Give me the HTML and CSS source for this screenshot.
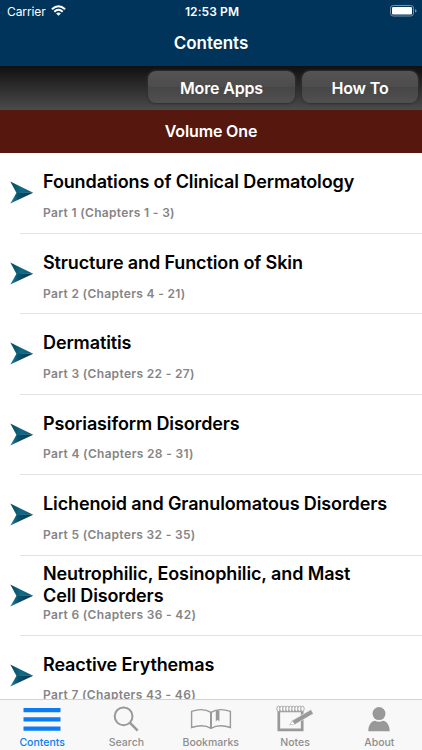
FILE: index.html
```
<!DOCTYPE html>
<html lang="en">
<head>
<meta charset="utf-8">
<title>Contents</title>
<link rel="stylesheet" href="styles.css">
</head>
<body>
<svg width="0" height="0" class="defs" aria-hidden="true">
  <defs>
    <linearGradient id="blade" x1="0" y1="0" x2="1" y2="0"><stop offset="0" stop-color="#06495f"/><stop offset=".5" stop-color="#126a86"/><stop offset="1" stop-color="#0b5a76"/></linearGradient>
    <linearGradient id="shade" x1="0" y1="0" x2="1" y2="0"><stop offset="0" stop-color="#2088a0"/><stop offset=".35" stop-color="#0a506b"/><stop offset="1" stop-color="#063549"/></linearGradient>
    <symbol id="arrow" viewBox="0 0 24 23"><path d="M.8.5 23.7 11.7 7 12Z" fill="url(#blade)"/><path d="M7 11.7H23.7L.8 22.5Z" fill="url(#shade)"/></symbol>
  </defs>
</svg>
<div class="screen">
  <header class="header">
    <div class="status">
      <div class="carrier"><span>Carrier</span>
        <svg width="15" height="11" viewBox="0 0 15 11"><g fill="none" stroke="#fff" stroke-width="2"><path d="M.9 4.2Q7.5-1.8 14.1 4.2"/><path d="M3.3 6.7Q7.5 2.9 11.7 6.7"/></g><path d="M5.1 8.4Q7.5 6.4 9.9 8.4L7.5 10.8Z" fill="#fff"/></svg>
      </div>
      <span class="time">12:53 PM</span>
      <svg class="battery" width="27" height="12" viewBox="0 0 27 12"><rect x=".5" y=".5" width="23" height="10.5" rx="2.7" fill="none" stroke="#7890a6"/><rect x="2" y="2" width="20" height="7.5" rx="1.2" fill="#fff"/><path d="M25 4Q26.6 4.4 26.6 5.8T25 7.6Z" fill="#7890a6"/></svg>
    </div>
    <h1>Contents</h1>
  </header>
  <nav class="toolbar">
    <button class="more"><span>More Apps</span></button>
    <button class="how"><span>How To</span></button>
  </nav>
  <h2 class="volume"><span>Volume One</span></h2>
  <main class="list">
    <article class="row"><svg class="arrow"><use href="#arrow"/></svg><div class="copy"><h3>Foundations of Clinical Dermatology</h3><p>Part 1 (Chapters 1 - 3)</p></div></article>
    <article class="row"><svg class="arrow"><use href="#arrow"/></svg><div class="copy"><h3>Structure and Function of Skin</h3><p>Part 2 (Chapters 4 - 21)</p></div></article>
    <article class="row"><svg class="arrow"><use href="#arrow"/></svg><div class="copy"><h3>Dermatitis</h3><p>Part 3 (Chapters 22 - 27)</p></div></article>
    <article class="row"><svg class="arrow"><use href="#arrow"/></svg><div class="copy"><h3>Psoriasiform Disorders</h3><p>Part 4 (Chapters 28 - 31)</p></div></article>
    <article class="row"><svg class="arrow"><use href="#arrow"/></svg><div class="copy"><h3>Lichenoid and Granulomatous Disorders</h3><p>Part 5 (Chapters 32 - 35)</p></div></article>
    <article class="row double"><svg class="arrow"><use href="#arrow"/></svg><div class="copy"><h3>Neutrophilic, Eosinophilic, and Mast<br>Cell Disorders</h3><p>Part 6 (Chapters 36 - 42)</p></div></article>
    <article class="row"><svg class="arrow"><use href="#arrow"/></svg><div class="copy"><h3>Reactive Erythemas</h3><p>Part 7 (Chapters 43 - 46)</p></div></article>
  </main>
  <footer class="tabs">
    <div class="tab active"><svg width="42" height="30" viewBox="0 0 42 30"><path d="M2.5 7h37v4.2h-37zM2.5 16.3h37v4.2h-37zM2.5 25.5h37v4.2h-37z" fill="#0b7cf4"/></svg><span>Contents</span></div>
    <div class="tab"><svg width="42" height="30" viewBox="0 0 42 30"><g fill="none" stroke="#999"><circle cx="18.6" cy="15.3" r="8.9" stroke-width="2"/><path d="m25 21.8 7.7 7.8" stroke-width="2.5"/></g></svg><span>Search</span></div>
    <div class="tab"><svg width="42" height="30" viewBox="0 0 42 30"><g fill="none" stroke="#999" stroke-width="1.4"><path d="M21 11.3C16 8.2 8 8.2 1.6 10.3V26.5C8 24.3 16 24.3 21 27.3C26 24.3 34 24.3 40.4 26.5V10.3C34 8.2 26 8.2 21 11.3Z"/><path d="M21 11v16" stroke-width="2"/></g><path d="M25.8 9.5H29.4V20.6L27.6 18.8 25.8 20.6Z" fill="#999"/></svg><span>Bookmarks</span></div>
    <div class="tab"><svg width="42" height="32" viewBox="0 0 42 32"><path d="M4.8 11h23.4v18.9H4.8Z" fill="none" stroke="#999" stroke-width="2.7"/><g fill="#f8f8f8" stroke="#999" stroke-width=".8"><ellipse cx="4.5" cy="8.7" rx="1.7" ry="2.7"/><ellipse cx="7.5" cy="8.7" rx="1.7" ry="2.7"/><ellipse cx="10.5" cy="8.7" rx="1.7" ry="2.7"/><ellipse cx="13.5" cy="8.7" rx="1.7" ry="2.7"/><ellipse cx="16.5" cy="8.7" rx="1.7" ry="2.7"/><ellipse cx="19.5" cy="8.7" rx="1.7" ry="2.7"/><ellipse cx="22.5" cy="8.7" rx="1.7" ry="2.7"/><ellipse cx="25.5" cy="8.7" rx="1.7" ry="2.7"/><ellipse cx="28.5" cy="8.7" rx="1.7" ry="2.7"/></g><path d="m14.6 25.5 4-5.2L37 9.5l2.4 4.2L21 24.5Z" fill="#999" stroke="#f8f8f8" stroke-width=".6"/><path d="m15.9 24.6 2.9-3.3 1.6 2.7Z" fill="#fff"/></svg><span>Notes</span></div>
    <div class="tab"><svg width="42" height="30" viewBox="0 0 42 30"><g fill="#999"><circle cx="21" cy="12.6" r="6.5"/><path d="M10.3 30.3C10.3 23.5 14 19.8 17 19.8Q21 21.6 25 19.8C28 19.8 31.7 23.5 31.7 30.3Z"/></g></svg><span>About</span></div>
  </footer>
</div>
</body>
</html>
```
FILE: styles.css
```
* { box-sizing: border-box; }
body { margin: 0; font-family: Inter, "Liberation Sans", sans-serif; background: #fff; overflow: hidden; }
h1, h2, h3, p { margin: 0; }
.defs { position: absolute; }
svg { display: block; flex: none; }
.screen { width: 422px; height: 750px; display: flex; flex-direction: column; overflow: hidden; }
.header { height: 66px; flex: none; background: #00345b; color: #fff; }
.status { height: 22px; display: grid; grid-template-columns: 1fr auto 1fr; align-items: center; padding: 0 5px 0 7px; font-size: 12px; }
.carrier { display: flex; align-items: center; gap: 5px; letter-spacing: -.1px; }
.carrier svg, .battery { margin-bottom: 1px; }
.time { font-weight: 600; letter-spacing: .1px; }
.battery { justify-self: end; }
h1 { height: 43px; line-height: 43px; text-align: center; font-size: 17px; font-weight: 600; letter-spacing: -.05px; }
.toolbar { height: 44px; flex: none; display: flex; justify-content: flex-end; gap: 7px; padding: 5px 4px 0 0; background: linear-gradient(#101010, #4b4b4b); }
button { height: 32px; padding: 2px 0 0; border: 0; border-radius: 8px; color: #fff; background: linear-gradient(#545454, #4c4c4c 49%, #464646 51%, #505050); box-shadow: 0 0 2px 1px #303030; font: 600 16px Inter, "Liberation Sans", sans-serif; letter-spacing: -.15px; }
.more { width: 147px; }
.how { width: 116px; }
.volume { height: 43px; flex: none; line-height: 43px; background: #55170e; color: #fff; text-align: center; font-size: 16px; font-weight: 600; letter-spacing: -.15px; }
.list { flex: 1; min-height: 0; overflow: hidden; }
.row { height: 80.4px; display: flex; padding: 0 0 0 9px; background: linear-gradient(#e2e2e2, #e2e2e2) 20px 100% / 100% 1px no-repeat; }
.row:first-child { height: 81px; }
.arrow { width: 25px; height: 23px; margin-top: 28px; }
.copy { padding: 18px 0 0 9px; white-space: nowrap; }
h3 { font-size: 18px; line-height: 22px; font-weight: 600; letter-spacing: -.12px; color: #000; }
.copy p { margin-top: 11.5px; font-size: 12px; line-height: 16px; font-weight: 600; letter-spacing: .33px; color: #858585; }
.double .copy { padding-top: 7px; }
.double .copy p { margin-top: 0; }
.tabs { height: 51px; flex: none; display: grid; grid-template-columns: repeat(5, 84.3px); border-top: 1px solid #d2d2d2; background: #f8f8f8; }
.tab { display: flex; flex-direction: column; align-items: center; color: #8e8e8e; font-size: 10.5px; font-weight: 500; letter-spacing: 0; }
.tab svg { height: 32px; overflow: visible; }
.tab span { margin-top: 4px; line-height: 14px; }
.active { color: #0b7cf4; }
```
